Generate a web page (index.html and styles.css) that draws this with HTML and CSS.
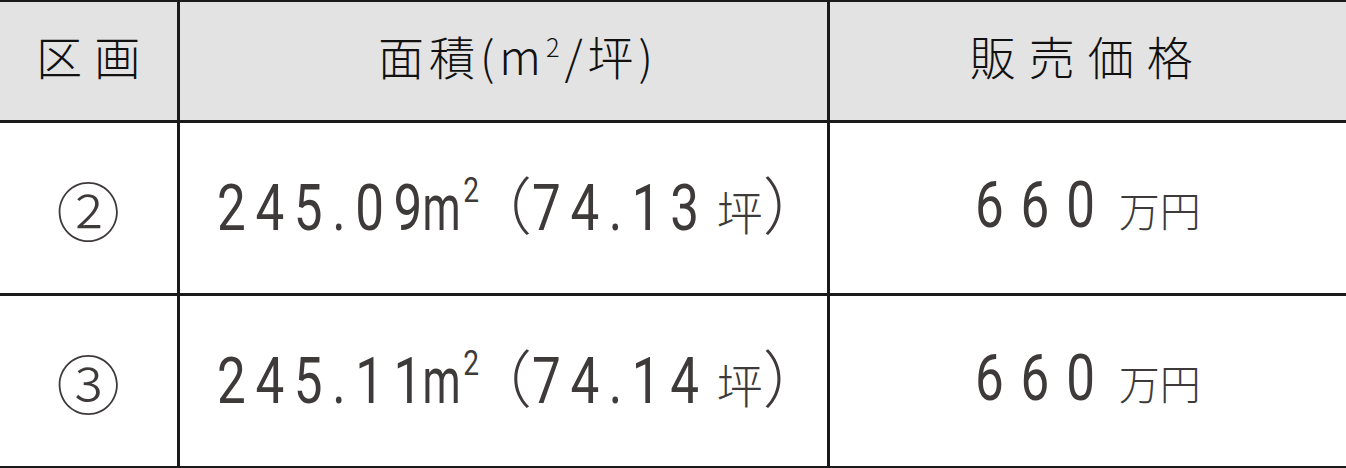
FILE: index.html
```html
<!DOCTYPE html>
<html lang="ja">
<head>
<meta charset="utf-8">
<link rel="stylesheet" href="styles.css">
</head>
<body>
<table class="price-table">
  <colgroup>
    <col class="c1"><col class="c2"><col class="c3">
  </colgroup>
  <thead>
    <tr>
      <th class="h-lot">区画</th>
      <th class="h-area">面積(m<sup>2</sup>/坪)</th>
      <th class="h-price">販売価格</th>
    </tr>
  </thead>
  <tbody>
    <tr>
      <td class="lot">②</td>
      <td>
        <div class="cell-line">
          <span class="cond sqm"><span class="digits">245.09</span><span class="m">m</span><sup>2</sup></span>
          <span class="paren open">（</span>
          <span class="cond tsubo-num"><span class="digits">74.13</span></span>
          <span class="unit tsubo">坪</span>
          <span class="paren close">）</span>
        </div>
      </td>
      <td>
        <div class="cell-line">
          <span class="cond price"><span class="digits wide">660</span></span>
          <span class="unit yen">万円</span>
        </div>
      </td>
    </tr>
    <tr>
      <td class="lot">③</td>
      <td>
        <div class="cell-line">
          <span class="cond sqm"><span class="digits">245.11</span><span class="m">m</span><sup>2</sup></span>
          <span class="paren open">（</span>
          <span class="cond tsubo-num"><span class="digits">74.14</span></span>
          <span class="unit tsubo">坪</span>
          <span class="paren close">）</span>
        </div>
      </td>
      <td>
        <div class="cell-line">
          <span class="cond price"><span class="digits wide">660</span></span>
          <span class="unit yen">万円</span>
        </div>
      </td>
    </tr>
  </tbody>
</table>
</body>
</html>
```
FILE: styles.css
```css
html, body {
  margin: 0;
  padding: 0;
  background: #fff;
}
.price-table {
  width: 1346px;
  border-collapse: collapse;
  table-layout: fixed;
  font-family: "Noto Sans CJK JP", "Noto Sans", sans-serif;
}
.c1 { width: 178px; }
.c2 { width: 650px; }
.c3 { width: 518px; }

.price-table th {
  background: #e3e3e3;
  height: 106px;
  padding: 0 0 12px 0;
  font-weight: 300;
  font-size: 46px;
  color: #111;
  text-align: center;
  border-top: 2px solid #1a1a1a;
  border-bottom: 3px solid #1a1a1a;
  border-left: 3px solid #1a1a1a;
  white-space: nowrap;
}
.price-table th:first-child,
.price-table td:first-child { border-left: none; }
.price-table th sup {
  font-size: 0.55em;
  vertical-align: 0.7em;
  line-height: 0;
}
.h-lot {
  letter-spacing: 12px;
  text-indent: 12px;
}
.h-area {
  letter-spacing: 5px;
  padding-left: 30px !important;
}
.h-price {
  letter-spacing: 13px;
}

.price-table td {
  height: 170px;
  padding: 0;
  text-align: center;
  color: #3e3a39;
  border-bottom: 3px solid #1a1a1a;
  border-left: 3px solid #1a1a1a;
  white-space: nowrap;
}
.lot {
  font-size: 64px;
  font-weight: 300;
}

.cell-line {
  display: flex;
  justify-content: center;
  align-items: baseline;
  line-height: 1;
  padding-bottom: 4px;
}

/* condensed DIN-like numerals */
.cond {
  display: inline-block;
  font-family: "Roboto", "Liberation Sans", sans-serif;
  font-size: 64px;
  transform: scaleX(0.8);
  transform-origin: left center;
}
.digits {
  letter-spacing: 12px;
}
.m {
  display: inline-block;
  margin-left: -12px;
  margin-right: -8px;
  transform: scaleX(0.85);
  transform-origin: left center;
}
.cond sup {
  font-size: 0.55em;
  vertical-align: 0.78em;
  line-height: 0;
  margin-left: 3px;
}
.sqm { margin-right: -65px; }
.tsubo-num { margin-right: -44px; }

.digits.wide {
  letter-spacing: 21px;
}
.price { margin-right: -34px; }

.paren {
  font-family: "Noto Sans CJK JP", sans-serif;
  font-weight: 300;
  font-size: 62px;
}
.paren.open {
  margin-left: -10px;
  margin-right: 0;
}
.paren.close {
  margin-left: 0;
  margin-right: -36px;
}
.unit {
  font-family: "Noto Sans CJK JP", sans-serif;
  font-weight: 300;
}
.tsubo {
  font-size: 46px;
  margin-left: 8px;
}
.yen {
  font-size: 41px;
  margin-left: 7px;
}
```
